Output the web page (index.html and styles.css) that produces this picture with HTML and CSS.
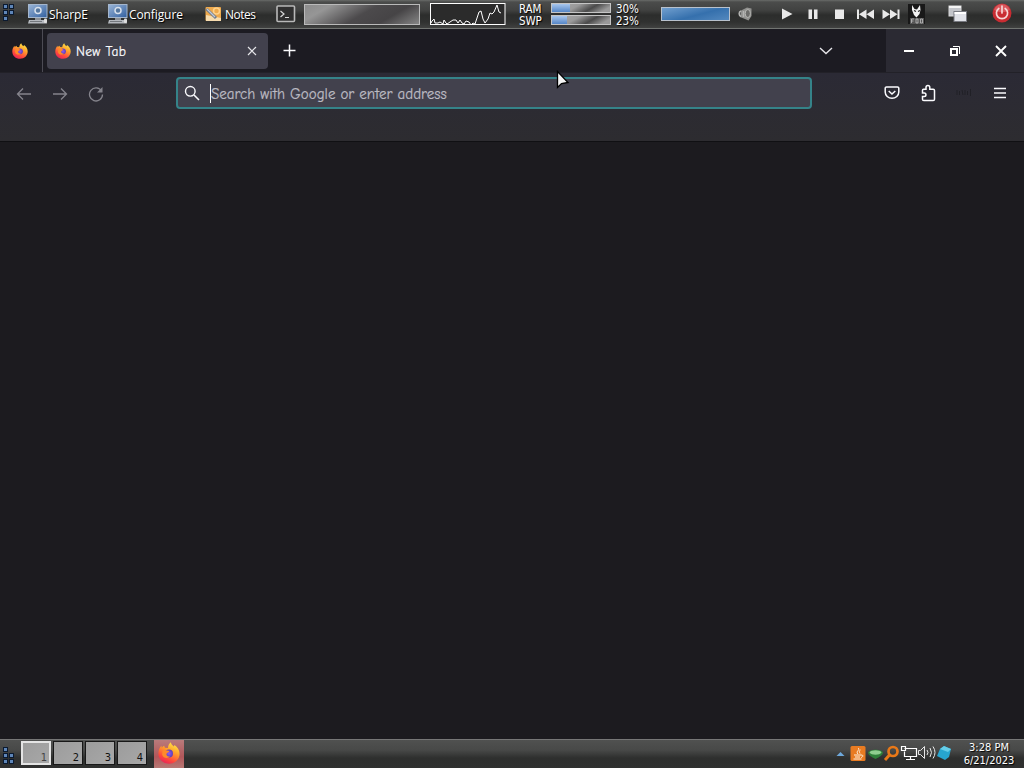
FILE: index.html
```html
<!DOCTYPE html>
<html lang="en">
<head>
  <meta charset="UTF-8" />
  <title>New Tab</title>
  <meta name="viewport" content="width=device-width, initial-scale=1.0" />
  <link rel="stylesheet" href="styles.css">
</head>
<body>
  <!-- shared icons -->
  <svg class="defs" width="0" height="0">
    <defs>
      <linearGradient id="screen" x1="0" y1="0" x2="1" y2="1">
        <stop offset="0" stop-color="#9bb6d8" />
        <stop offset="1" stop-color="#315f9f" />
      </linearGradient>
      <linearGradient id="flame" x1="0.8" y1="0" x2="0.3" y2="1">
        <stop offset="0" stop-color="#fff04a" />
        <stop offset="0.4" stop-color="#ffa02c" />
        <stop offset="0.75" stop-color="#ff4a3c" />
        <stop offset="1" stop-color="#e82358" />
      </linearGradient>
      <radialGradient id="globe">
        <stop offset="0" stop-color="#8f5cf0" />
        <stop offset="1" stop-color="#5b3fb8" />
      </radialGradient>
      <symbol id="monitor" viewBox="0 0 20 20">
        <rect x="0.5" y="0.5" width="18.5" height="13" fill="url(#screen)" stroke="#a5b7cd" />
        <circle cx="10" cy="6.5" r="3" fill="#55779f" stroke="#d8e1ec" stroke-width="1.500" />
        <path d="M7 14h6v2.500H7z" fill="#8b9096" />
        <path d="M1 16h17l1 3.500H0z" fill="#b5b9be" />
        <path d="M2 17.500h12" stroke="#74787d" />
        <rect x="16" y="14.500" width="3" height="4.500" rx="1" fill="#dedede" />
      </symbol>
      <symbol id="firefox" viewBox="0 0 16 16">
        <path d="M9.300 0.200c.2 1.500 1.300 2.200 2.200 3.100l.5-1.200c2.200 1.600 3.700 3.700 3.700 6.500 0 4.100-3.300 7.200-7.600 7.200C3.700 15.800.3 12.700.3 8.400c0-2.500.9-4.300 2.100-5.700l.4 1.500c.5-.7 1-1.100 1.700-1.400l.5 1.300 2.200.2c.2-1.700.7-3.100 2.100-4.100z" fill="url(#flame)" />
        <circle cx="8" cy="8.300" r="2.900" fill="url(#globe)" />
        <path d="M3.400 6.200c2-.9 3.300.2 4.800.4-.2 1.200-1.600 1.100-2 2-.4 1.200.9 2.300 2.600 1.800-1.300 1.900-5.200 1.600-5.800-1.400z" fill="#ff8a2a" />
      </symbol>
    </defs>
  </svg>

  <div class="bar top-bar">
    <svg class="grip" width="13" height="18" viewBox="0 0 13 18">
      <g fill="#5f86b8" stroke="#0b1a30">
        <rect x="0.500" y="0.500" width="4" height="4" /><rect x="6.500" y="0.500" width="4" height="4" />
        <rect x="0.500" y="6.500" width="4" height="4" /><rect x="6.500" y="6.500" width="4" height="4" />
        <rect x="0.500" y="12.500" width="4" height="4" />
      </g>
    </svg>
    <div class="launcher sharpe"><svg width="20" height="20"><use href="#monitor" /></svg><span>SharpE</span></div>
    <div class="launcher configure"><svg width="20" height="20"><use href="#monitor" /></svg><span>Configure</span></div>
    <div class="launcher notes">
      <svg width="17" height="16" viewBox="0 0 17 16">
        <rect x="0.500" y="1" width="15.500" height="14" rx="1" fill="#efaa4d" />
        <path d="M1 9l15 3v3H1z" fill="#f7dcae" />
        <circle cx="11.500" cy="5" r="3" fill="none" stroke="#ffd18a" stroke-width="1.500" />
        <path d="M1.500 3l9.500 9" stroke="#6f7a8c" stroke-width="3" />
        <path d="M2 3l8 8" stroke="#c3cad6" stroke-width="1.200" />
      </svg>
      <span>Notes</span>
    </div>
    <svg class="terminal" width="20" height="18" viewBox="0 0 20 18">
      <rect x="1" y="1" width="17.500" height="15.500" rx="1" fill="#2f2f2f" stroke="#b9b9b9" stroke-width="1.600" />
      <path d="M4.500 6l3.500 3-3.500 3M9 12.500h4" fill="none" stroke="#d8d8d8" stroke-width="1.200" />
    </svg>
    <div class="cpu-meter"></div>
    <svg class="cpu-graph" width="76" height="23" viewBox="0 0 76 23">
      <rect x="0.500" y="0.500" width="74.500" height="21" fill="#2b2b2b" stroke="#fff" />
      <path d="M1 20l1-2 2-2 1 4 3 0 2-1 3 2 1-4 2 3 1 1 3-2 3-2 3 0 2 3 2-3 2 3 2 1 2-3 3 1 2 3 2-2 2 1 2-6 2-6 2-1 2 8 2 4 3-4 2-6 2 1 2-2 3-7 2 7 2 1" fill="none" stroke="#fff" />
    </svg>
    <div class="memory">
      <span>RAM</span><div class="meter"><div class="fill" style="width: 31%"></div></div><span class="pct">30%</span>
      <span>SWP</span><div class="meter"><div class="fill" style="width: 25%"></div></div><span class="pct">23%</span>
    </div>
    <div class="volume"></div>
    <svg class="speaker" width="15" height="14" viewBox="0 0 15 14">
      <path d="M3 3.500l6-3 4.500 1V9l-3 4.500L7 12 2 10z" fill="#91918f" />
      <ellipse cx="9.800" cy="6.500" rx="2.600" ry="4" fill="#6c6c6a" stroke="#b9b9b6" />
      <path d="M3 4c-2.500 1-2.500 4.500 0 5.500M5.500 4v6" fill="none" stroke="#b4b4b2" stroke-width="1.500" />
    </svg>
    <svg class="player" width="118" height="14" viewBox="0 0 118 14" fill="#e9e9e9">
      <path d="M0 1.500L10.500 7 0 12.500z" />
      <path d="M26.500 2.500h3.500v9.500h-3.500zM32 2.500h3.500v9.500H32z" />
      <path d="M53 2.500h9V12h-9z" />
      <path d="M75 2.500h2V12h-2zM84.500 2.500V12L77 7.200zM92 2.500V12l-7.500-4.800z" />
      <path d="M100.500 2.500L108 7.200l-7.500 4.800zM108 2.500l7.500 4.700L108 12zM115.500 2.500h2V12h-2z" />
    </svg>
    <svg class="foobar" width="18" height="21" viewBox="0 0 18 21">
      <rect x="0" y="0" width="17" height="20" fill="#181818" />
      <path d="M4 1l2.500 4 2.500.5L12 1l.5 5-1 4-3 3.500L6 11 4 6z" fill="#f2f2f2" />
      <path d="M6 6.500l2 1M10 7.500l2-1" stroke="#222" stroke-width="1.300" />
      <rect x="2" y="14" width="14" height="6" fill="#555" />
      <path d="M3.500 19v-4h2.500M3.500 17h2M8 15v4h2v-4zM12.500 15h2v4h-2z" fill="none" stroke="#ccc" stroke-width="0.700" />
    </svg>
    <svg class="windows" width="20" height="18" viewBox="0 0 20 18">
      <rect x="1" y="1" width="12" height="10" fill="#c3c5ca" stroke="#d9d9db" />
      <path d="M1 2h12" stroke="#f4f4f4" stroke-width="2" />
      <rect x="6" y="6.500" width="12.500" height="10" fill="#e0e2e8" stroke="#777980" />
      <path d="M6.500 8h11.500" stroke="#fff" stroke-width="2" />
    </svg>
    <svg class="power" width="20" height="20" viewBox="0 0 20 20">
      <circle cx="10" cy="10" r="9.500" fill="#c92c32" />
      <path d="M2 7a8.500 8.500 0 0 1 16 0C13 10 7 10 2 7z" fill="#d9575c" />
      <path d="M6.800 5.500a5.600 5.600 0 1 0 6.400 0M10 3v7" fill="none" stroke="#f6d5d5" stroke-width="1.700" stroke-linecap="round" />
    </svg>
  </div>

  <div class="tab-strip">
    <div class="pinned"><svg width="16" height="16"><use href="#firefox" /></svg></div>
    <div class="tab">
      <svg width="16" height="16"><use href="#firefox" /></svg>
      <span>New Tab</span>
      <svg width="10" height="10" viewBox="0 0 10 10"><path d="M1 1l8 8M9 1L1 9" stroke="#e6e6ea" stroke-width="1.200" /></svg>
    </div>
    <svg class="new-tab" width="13" height="13" viewBox="0 0 13 13"><path d="M6.500 0.500v12M0.500 6.500h12" stroke="#fbfbfe" stroke-width="1.500" /></svg>
    <svg class="all-tabs" width="14" height="8" viewBox="0 0 14 8"><path d="M1 1l6 5.500L13 1" fill="none" stroke="#e6e6ea" stroke-width="1.400" /></svg>
    <div class="controls">
      <svg width="12" height="12" viewBox="0 0 12 12"><path d="M1 6h10" stroke="#fff" stroke-width="2" /></svg>
      <svg width="12" height="12" viewBox="0 0 12 12"><path d="M2 4h6v6H2z" fill="none" stroke="#fff" stroke-width="2" /><path d="M4 1.500h6.500V9" fill="none" stroke="#fff" /></svg>
      <svg width="12" height="12" viewBox="0 0 12 12"><path d="M1 1l10 10M11 1L1 11" stroke="#fff" stroke-width="1.900" /></svg>
    </div>
  </div>

  <div class="toolbar">
    <div class="nav">
      <svg width="16" height="14" viewBox="0 0 16 14"><path d="M15 7H1.500M7 1.500L1.500 7 7 12.500" /></svg>
      <svg width="16" height="14" viewBox="0 0 16 14"><path d="M1 7h13.500M9 1.500L14.500 7 9 12.500" /></svg>
      <svg width="16" height="16" viewBox="0 0 16 16"><path d="M13.500 5A6.500 6.500 0 1 0 14.500 8.500" /><path d="M14.500 1v5.500H9z" fill="#85848c" stroke="none" /></svg>
    </div>
    <div class="url-bar">
      <svg width="16" height="16" viewBox="0 0 16 16"><circle cx="6.300" cy="6.300" r="4.800" fill="none" stroke="#fbfbfe" stroke-width="1.400" /><path d="M10 10l5 5" stroke="#fbfbfe" stroke-width="1.600" /></svg>
      <span class="caret"></span>
      <span class="placeholder">Search with Google or enter address</span>
    </div>
    <div class="actions">
      <svg width="16" height="16" viewBox="0 0 16 16"><path d="M2.500 2h11a1.300 1.300 0 0 1 1.300 1.300V7a6.800 6.300 0 0 1-13.600 0V3.300A1.300 1.300 0 0 1 2.500 2zM4.700 6L8 9l3.300-3" /></svg>
      <svg width="16" height="18" viewBox="0 0 16 18"><path d="M2.500 9V6.300Q2.500 5.300 3.500 5.300H6V3.500a1.900 1.900 0 0 1 3.800 0v1.800h3.400q1.300 0 1.300 1.300v8.600q0 1.300-1.300 1.300H3.800q-1.300 0-1.300-1.300v-2.700h1.700a1.700 1.700 0 0 0 0-3.500z" /></svg>
      <svg class="faint" width="16" height="10" viewBox="0 0 16 10"><path d="M1 2v5M3.500 3v4M6 2l1 5M9 2v5M11.500 3v4M14.500 1v7" /></svg>
      <svg class="menu" width="14" height="12" viewBox="0 0 14 12"><path d="M1 1.500h12M1 6h12M1 10.500h12" /></svg>
    </div>
  </div>

  <div class="page"></div>

  <div class="bar bottom-bar">
    <svg class="grip" width="13" height="18" viewBox="0 0 13 18">
      <g fill="#5f86b8" stroke="#0b1a30">
        <rect x="0.500" y="0.500" width="4" height="4" />
        <rect x="0.500" y="6.500" width="4" height="4" /><rect x="6.500" y="6.500" width="4" height="4" />
        <rect x="0.500" y="12.500" width="4" height="4" /><rect x="6.500" y="12.500" width="4" height="4" />
      </g>
    </svg>
    <div class="desktops">
      <div class="desktop active">1</div>
      <div class="desktop">2</div>
      <div class="desktop">3</div>
      <div class="desktop">4</div>
    </div>
    <div class="task"><svg width="22" height="22"><use href="#firefox" /></svg></div>
    <svg class="tray" width="116" height="18" viewBox="0 0 116 18">
      <path d="M0.500 11l4-4 4 4z" fill="#6ea9dc" />
      <rect x="14.500" y="1" width="15" height="15" rx="1.500" fill="#e87b22" />
      <path d="M22 3c3 2-3 3 0 6M24.500 5c-2 1-1 2-.5 3.500M18 10h7M19 12h5M17.500 14h8M25 10c3 0 2 2 0 2.500" fill="none" stroke="#fff2df" />
      <path d="M32 8c0-4.500 15-4.500 15 0q-1 3-7.500 6Q33 11 32 8z" fill="#2f7f3a" />
      <path d="M33.500 7.500c1-3 11-3 12 0-2 3-10 3-12 0z" fill="#8fce90" />
      <circle cx="57" cy="6.500" r="4.500" fill="none" stroke="#e87818" stroke-width="2.700" />
      <path d="M53.500 10l-4.500 5" stroke="#e87818" stroke-width="3" />
      <path d="M68.500 3.500h12v8h-12v-5M74.500 11.500v3M70 14.500h9M65.500 1.500h4v4h-4z" fill="none" stroke="#fff" stroke-width="1.200" />
      <path d="M82.500 5.500h2l4-4v12l-4-4h-2zM91 5q2 2.500 0 5M94 3q3 4.500 0 9M97 1.500q4 6 0 12" fill="none" stroke="#e6e6e6" />
      <path d="M104 4l4-3 7 3-2 8-4 3-8-4z" fill="#27a5cf" />
      <path d="M104 4l4-3 7 3-3 3z" fill="#65cde8" />
    </svg>
    <div class="clock"><span>3:28 PM</span><span>6/21/2023</span></div>
  </div>

  <svg class="cursor" width="14" height="20" viewBox="0 0 14 20"><path d="M1.500 1.500v16l4-4 6.500-1z" fill="#f5f5f5" stroke="#000" stroke-width="1.300" /></svg>
</body>
</html>
```

FILE: styles.css
```css
* {
  box-sizing: border-box;
}

body {
  display: flex;
  flex-direction: column;
  width: 1024px;
  height: 768px;
  margin: 0;
  overflow: hidden;
  background-color: #1c1b1f;
  color: #fff;
  font-family: "Open Sans", "Noto Sans", sans-serif;
}

svg {
  display: block;
  flex: none;
}

.defs {
  position: absolute;
}

.bar {
  display: flex;
  flex: none;
  height: 29px;
  text-shadow: 1px 1px 1px #000;
}

.top-bar {
  align-items: center;
  background: linear-gradient(#696b69 0, #4b4c4b 2px, #414241 10px, #2c2d2c 15px, #303130 22px, #404140 28px);
  border-bottom: 1px solid #717471;
}

.grip {
  margin-left: 3px;
}

.top-bar .grip {
  margin-top: -3px;
}

.launcher {
  display: flex;
  align-items: center;
  gap: 1px;
  font-size: 12px;
  letter-spacing: -0.1px;
  white-space: nowrap;
}

.sharpe {
  width: 80px;
  margin-left: 12px;
}

.configure {
  width: 97px;
}

.notes {
  gap: 3px;
  width: 71px;
}

.notes span {
  letter-spacing: -0.5px;
}

.cpu-meter {
  width: 116px;
  height: 21px;
  margin-left: 8px;
  border: 1px solid #bababa;
  background: linear-gradient(150deg, #8c8c8c 0%, #969696 18%, #4c4a4c 50%, #464446 72%, #858585 100%);
}

.cpu-graph {
  margin-left: 10px;
}

.memory {
  display: grid;
  grid-template-columns: 32px 60px 30px;
  grid-template-rows: 12px 12px;
  align-items: center;
  width: 122px;
  margin-left: 13px;
  font-family: "DejaVu Sans Condensed", "DejaVu Sans", sans-serif;
  font-size: 11.5px;
  line-height: 12px;
}

.memory span {
  padding-top: 1px;
  letter-spacing: -0.1px;
}

.memory .pct {
  padding-left: 5px;
}

.meter {
  height: 10px;
  border: 1px solid #c5c5c5;
  background: linear-gradient(150deg, #aaa 10%, #999 40%, #4a4a4a 65%, #999 88%);
}

.fill {
  height: 100%;
  background: linear-gradient(#a8c6ed, #5586c6);
}

.volume {
  width: 69px;
  height: 14px;
  margin-left: 20px;
  border: 1px solid #b8c1cc;
  background: linear-gradient(165deg, #719fcf, #3570ad 55%, #5388be);
}

.speaker {
  margin-left: 8px;
}

.player {
  margin-left: 29px;
}

.foobar {
  margin-left: 8px;
}

.windows {
  margin-left: 22px;
  margin-top: -1px;
}

.power {
  margin-left: 24px;
  margin-top: -2px;
}

/* Firefox */
.tab-strip {
  display: flex;
  align-items: center;
  flex: none;
  height: 44px;
  background-color: #1c1b22;
  border-bottom: 1px solid #222128;
}

.pinned {
  display: flex;
  align-items: center;
  width: 43px;
  height: 43px;
  padding-left: 12px;
  border-right: 1px solid #4c4b54;
}

.tab {
  display: flex;
  align-items: center;
  width: 221px;
  height: 36px;
  margin-left: 4px;
  padding: 0 11px 0 8px;
  border-radius: 4px;
  background-color: #42414d;
}

.tab span {
  flex: 1;
  margin-left: 5px;
  padding-top: 2px;
  color: #fbfbfe;
  font-family: "Comic Sans MS", "Comic Neue", "Noto Sans", sans-serif;
  font-size: 13.5px;
  letter-spacing: 0.3px;
  -webkit-text-stroke: 0.2px #fbfbfe;
}

.new-tab {
  margin-left: 15px;
}

.all-tabs {
  margin-left: auto;
  margin-right: 53px;
}

.controls {
  display: flex;
  align-items: center;
  gap: 34px;
  width: 138px;
  height: 43px;
  padding-left: 17px;
  background-color: #2b2a33;
}

.toolbar {
  display: flex;
  align-items: flex-start;
  flex: none;
  height: 69px;
  padding-top: 4px;
  background: linear-gradient(#2b2a35, #2d2c30);
  border-bottom: 1px solid #101013;
}

.nav {
  display: flex;
  align-items: center;
  gap: 20px;
  width: 176px;
  height: 33px;
  padding-left: 16px;
  fill: none;
  stroke: #85848c;
  stroke-width: 1.3;
}

.url-bar {
  display: flex;
  align-items: center;
  width: 636px;
  height: 32px;
  padding-left: 6px;
  border: 2px solid #358389;
  border-radius: 4px;
  background-color: #42414d;
}

.caret {
  width: 1px;
  height: 19px;
  margin-left: 10px;
  background-color: #fff;
}

.placeholder {
  padding-top: 1px;
  color: #bcbbc3;
  font-family: "Comic Sans MS", "Comic Neue", "Noto Sans", sans-serif;
  font-size: 15px;
  -webkit-text-stroke: 0.2px #bcbbc3;
  white-space: nowrap;
}

.actions {
  display: flex;
  align-items: center;
  gap: 20px;
  height: 32px;
  margin-left: 72px;
  fill: none;
  stroke: #fbfbfe;
  stroke-width: 1.5;
}

.faint {
  stroke: #202026;
  stroke-width: 1;
}

.menu {
  margin-left: 1px;
}

.page {
  flex: 1;
}

/* taskbar */
.bottom-bar {
  align-items: center;
  background: linear-gradient(#505150 0, #484948 10px, #2e2f2e 18px, #303130 29px);
  border-top: 1px solid #777;
}

.bottom-bar .grip {
  margin-top: 3px;
}

.desktops {
  display: flex;
  gap: 2px;
  margin: -2px 0 0 5px;
}

.desktop {
  width: 30px;
  height: 24px;
  padding: 9px 3px 0 0;
  border: 1px solid #181818;
  background: linear-gradient(135deg, #9c9c9c, #a8a8a8);
  color: #111;
  font-family: "DejaVu Sans Condensed", "DejaVu Sans", sans-serif;
  font-size: 11px;
  line-height: 14px;
  text-align: right;
  text-shadow: none;
}

.active {
  border: 2px solid #e4e4e4;
  padding: 8px 2px 0 0;
  color: #444;
}

.task {
  display: flex;
  justify-content: center;
  width: 30px;
  height: 28px;
  padding-top: 2px;
  margin-left: 7px;
  background: linear-gradient(#b97b7b, #b2575a 60%, #b77975);
}

.tray {
  margin-left: auto;
}

.clock {
  display: flex;
  flex-direction: column;
  width: 54px;
  margin: 0 8px 0 10px;
  font-family: "DejaVu Sans Condensed", "DejaVu Sans", sans-serif;
  font-size: 11px;
  line-height: 13px;
  text-align: center;
  white-space: nowrap;
}

/* mouse pointer floats over the tab strip and url bar */
.cursor {
  position: absolute;
  left: 556px;
  top: 70px;
}
```
